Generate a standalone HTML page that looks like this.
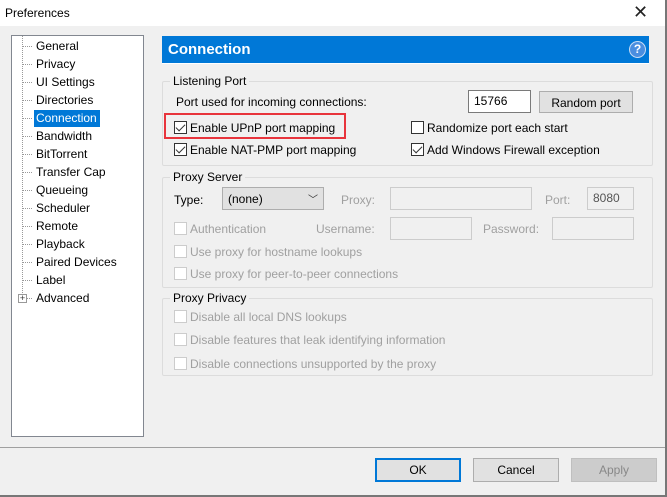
<!DOCTYPE html>
<html><head><style>
*{margin:0;padding:0;box-sizing:border-box}
body{width:667px;height:497px;background:#f0f0f0;font-family:"Liberation Sans",sans-serif;font-size:12px;color:#000;position:relative;overflow:hidden}
.a{position:absolute;white-space:nowrap}
.title{left:0;top:0;width:667px;height:26px;background:#fff}
.tree{left:11px;top:35px;width:133px;height:402px;background:#fff;border:1px solid #828790}
.grp{position:absolute;border:1px solid #dcdcdc;border-radius:2px}
.lg{position:absolute;background:#f0f0f0;padding:0 3px;top:-8px;left:7px}
.cb{position:absolute;width:13px;height:13px;border:1px solid #333;background:#fff}
.cb.dis{border-color:#ccc}
.chk::after{content:"";position:absolute;left:3px;top:0px;width:4px;height:8px;border:solid #333;border-width:0 1.5px 1.5px 0;transform:rotate(45deg)}
.dis{color:#a0a0a0}
.box{position:absolute;background:#fff;border:1px solid #7a7a7a}
.box.d{border-color:#ccc;background:#f0f0f0}
.btn{position:absolute;background:#e1e1e1;border:1px solid #adadad;text-align:center;line-height:22px}
.ti{position:absolute;left:24px}
.dot{position:absolute;left:10px;width:10px;border-top:1px dotted #999}
</style></head><body>
<div class="a title"></div>
<div class="a" style="left:5px;top:6px">Preferences</div>
<div class="a" style="left:633px;top:2px;font-size:18px;color:#222">✕</div>
<div class="a" style="left:665px;top:0;width:2px;height:497px;background:#777"></div>
<div class="a" style="left:0;top:495px;width:667px;height:2px;background:#777"></div>

<div class="a tree">
<div class="a" style="left:10px;top:0;height:257px;border-left:1px dotted #999"></div>
<div class="dot" style="top:10px"></div><div class="ti a" style="top:3px">General</div>
<div class="dot" style="top:28px"></div><div class="ti a" style="top:21px">Privacy</div>
<div class="dot" style="top:46px"></div><div class="ti a" style="top:39px">UI Settings</div>
<div class="dot" style="top:64px"></div><div class="ti a" style="top:57px">Directories</div>
<div class="dot" style="top:82px"></div><div class="a" style="left:22px;top:74px;width:66px;height:17px;background:#0078d7"></div><div class="ti a" style="top:75px;color:#fff">Connection</div>
<div class="dot" style="top:100px"></div><div class="ti a" style="top:93px">Bandwidth</div>
<div class="dot" style="top:118px"></div><div class="ti a" style="top:111px">BitTorrent</div>
<div class="dot" style="top:136px"></div><div class="ti a" style="top:129px">Transfer Cap</div>
<div class="dot" style="top:154px"></div><div class="ti a" style="top:147px">Queueing</div>
<div class="dot" style="top:172px"></div><div class="ti a" style="top:165px">Scheduler</div>
<div class="dot" style="top:190px"></div><div class="ti a" style="top:183px">Remote</div>
<div class="dot" style="top:208px"></div><div class="ti a" style="top:201px">Playback</div>
<div class="dot" style="top:226px"></div><div class="ti a" style="top:219px">Paired Devices</div>
<div class="dot" style="top:244px"></div><div class="ti a" style="top:237px">Label</div>
<div class="dot" style="top:262px"></div><div class="a" style="left:6px;top:258px;width:9px;height:9px;border:1px solid #999;background:#fff;font-size:9px;line-height:7px;text-align:center;color:#333">+</div><div class="ti a" style="top:255px">Advanced</div>
</div>

<div class="a" style="left:162px;top:36px;width:487px;height:28px;background:#0078d7;border-bottom:1px solid #fff"></div>
<div class="a" style="left:168px;top:41px;color:#fff;font-weight:bold;font-size:15px">Connection</div>
<div class="a" style="left:629px;top:41px;width:17px;height:17px;border-radius:50%;background:#4a8ee0;border:1px solid #c8dcf5;color:#fff;font-weight:bold;font-size:12px;text-align:center;line-height:15px">?</div>

<div class="grp" style="left:162px;top:81px;width:491px;height:85px"><span class="lg">Listening Port</span></div>
<div class="a" style="left:176px;top:95px">Port used for incoming connections:</div>
<div class="box" style="left:468px;top:90px;width:63px;height:23px;padding:3px 5px">15766</div>
<div class="btn" style="left:539px;top:91px;width:94px;height:22px;">Random port</div>
<div class="a" style="left:164px;top:113px;width:182px;height:26px;border:2px solid #e8343c"></div>
<div class="cb chk" style="left:174px;top:121px"></div><div class="a" style="left:190px;top:121px">Enable UPnP port mapping</div>
<div class="cb chk" style="left:174px;top:143px"></div><div class="a" style="left:190px;top:143px">Enable NAT-PMP port mapping</div>
<div class="cb" style="left:411px;top:121px"></div><div class="a" style="left:427px;top:121px">Randomize port each start</div>
<div class="cb chk" style="left:411px;top:143px"></div><div class="a" style="left:427px;top:143px">Add Windows Firewall exception</div>

<div class="grp" style="left:162px;top:177px;width:491px;height:111px"><span class="lg">Proxy Server</span></div>
<div class="a" style="left:174px;top:193px">Type:</div>
<div class="a" style="left:222px;top:187px;width:102px;height:23px;background:#e1e1e1;border:1px solid #adadad;padding:4px 5px">(none)<span style="position:absolute;right:5px;top:3px;font-size:10px;color:#333">﹀</span></div>
<div class="a dis" style="left:341px;top:193px">Proxy:</div>
<div class="box d" style="left:390px;top:187px;width:142px;height:23px"></div>
<div class="a dis" style="left:545px;top:193px">Port:</div>
<div class="box d" style="left:587px;top:187px;width:47px;height:23px;padding:3px 5px;color:#555">8080</div>
<div class="cb dis" style="left:174px;top:222px"></div><div class="a dis" style="left:190px;top:222px">Authentication</div>
<div class="a dis" style="left:316px;top:222px">Username:</div>
<div class="box d" style="left:390px;top:217px;width:82px;height:23px"></div>
<div class="a dis" style="left:483px;top:222px">Password:</div>
<div class="box d" style="left:552px;top:217px;width:82px;height:23px"></div>
<div class="cb dis" style="left:174px;top:245px"></div><div class="a dis" style="left:190px;top:245px">Use proxy for hostname lookups</div>
<div class="cb dis" style="left:174px;top:267px"></div><div class="a dis" style="left:190px;top:267px">Use proxy for peer-to-peer connections</div>

<div class="grp" style="left:162px;top:298px;width:491px;height:78px"><span class="lg">Proxy Privacy</span></div>
<div class="cb dis" style="left:174px;top:310px"></div><div class="a dis" style="left:190px;top:310px">Disable all local DNS lookups</div>
<div class="cb dis" style="left:174px;top:333px"></div><div class="a dis" style="left:190px;top:333px">Disable features that leak identifying information</div>
<div class="cb dis" style="left:174px;top:357px"></div><div class="a dis" style="left:190px;top:357px">Disable connections unsupported by the proxy</div>

<div class="a" style="left:0;top:447px;width:665px;height:1px;background:#a0a0a0"></div>
<div class="btn" style="left:375px;top:458px;width:86px;height:24px;border:2px solid #0078d7;line-height:20px">OK</div>
<div class="btn" style="left:473px;top:458px;width:86px;height:24px">Cancel</div>
<div class="btn" style="left:571px;top:458px;width:86px;height:24px;background:#ccc;border-color:#bfbfbf;color:#888">Apply</div>
</body></html>
